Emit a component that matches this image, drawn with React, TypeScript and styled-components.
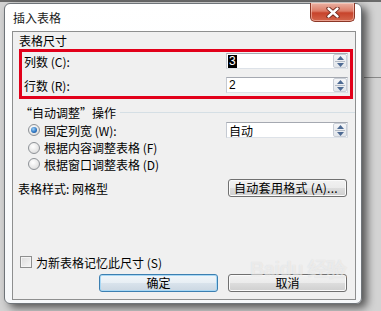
import styled, { createGlobalStyle } from 'styled-components';

const GlobalStyle = createGlobalStyle`
  html, body {
    margin: 0;
    padding: 0;
  }
  body {
    width: 381px;
    height: 311px;
    overflow: hidden;
    font-family: "Noto Sans CJK SC", "Liberation Sans", sans-serif;
    font-size: 12px;
    color: #000;
  }
`;

const Desktop = styled.div`
  width: 381px;
  height: 311px;
  box-sizing: border-box;
  padding: 3px 0 0 4px;
  background:
    linear-gradient(#8a8a8a, #8a8a8a) no-repeat 364px 77px / 17px 1px,
    linear-gradient(#6a6a6a, #6a6a6a) no-repeat 0 0 / 100% 2px,
    #d3d3d3;
`;

const Window = styled.div`
  position: relative;
  width: 358px;
  height: 301px;
  box-sizing: border-box;
  border: 1px solid #6f7479;
  border-radius: 6px;
  background: linear-gradient(#ffffff, #f6f8fa);
  box-shadow: 5px 4px 9px rgba(0, 0, 0, 0.6);
  display: flex;
  flex-direction: column;
  padding: 0 5px 3px 7px;
`;

const TitleBar = styled.div`
  height: 27px;
  display: flex;
  justify-content: space-between;
  align-items: flex-start;
`;

const Title = styled.div`
  padding: 5px 0 0 1px;
  font-size: 12px;
  line-height: 17px;
  color: #1a1a1a;
`;

const CloseButton = styled.div`
  width: 45px;
  height: 19px;
  margin: -1px 1px 0 0;
  box-sizing: border-box;
  border: 1px solid #8b3626;
  border-top: none;
  border-radius: 0 0 5px 5px;
  background: linear-gradient(#eab1a3 0%, #dc7b66 45%, #c7432b 55%, #d4664c 100%);
  box-shadow: inset 0 0 0 1px rgba(255, 220, 210, 0.5);
  display: flex;
  align-items: center;
  justify-content: center;
`;

const Client = styled.div`
  flex: 1;
  border: 1px solid #8e8f8f;
  background: #f0f0f0;
  display: flex;
  flex-direction: column;
  padding-bottom: 7px;
  line-height: 17px;
`;

const GroupHeader = styled.div<{ $indent: number }>`
  height: 17px;
  display: flex;
  align-items: center;
  gap: 4px;
  padding-left: ${p => p.$indent}px;
`;

const GroupLine = styled.div`
  flex: 1;
  height: 1px;
  margin-top: 1px;
  background: #d5dfe5;
`;

const Highlight = styled.div`
  height: 50px;
  box-sizing: border-box;
  margin: 0 2px 0 6px;
  border: 3px solid #e2001a;
  padding: 1px 2px 3px 2px;
  display: flex;
  flex-direction: column;
  gap: 8px;
`;

const FieldRow = styled.div`
  height: 16px;
  display: flex;
  align-items: center;
  justify-content: space-between;
`;

const SpinField = styled.div`
  width: 122px;
  height: 16px;
  box-sizing: border-box;
  border: 1px solid #a5a9b1;
  border-color: #a5a9b1 #d6dbe2 #dde2e8 #c5cad2;
  background: #fff;
  display: flex;
  align-items: center;
  justify-content: space-between;
  padding: 0 0 0 1px;
`;

const FieldValue = styled.span<{ $selected?: boolean }>`
  font-family: "Liberation Sans", sans-serif;
  font-size: 12px;
  line-height: 13px;
  padding: 0 1px;
  background: ${p => (p.$selected ? '#000' : 'transparent')};
  color: ${p => (p.$selected ? '#fff' : '#000')};
`;

const Spinner = styled.div`
  width: 14px;
  height: 14px;
  box-sizing: border-box;
  border: 1px solid #c9ced6;
  border-radius: 2px;
  background: linear-gradient(#f5f6f8, #e2e6eb);
  display: flex;
  flex-direction: column;
  align-items: center;
  justify-content: space-around;
  padding: 0;
  margin-right: 0;
`;

const SpinDivider = styled.div`
  width: 10px;
  height: 1px;
  background: #b3bbc6;
`;

const Row = styled.div<{ $h: number; $indent: number }>`
  height: ${p => p.$h}px;
  display: flex;
  align-items: center;
  padding-left: ${p => p.$indent}px;
  padding-right: 7px;
`;

const Grow = styled.div`
  flex: 1;
`;

const Radio = styled.span<{ $checked?: boolean }>`
  width: 12px;
  height: 12px;
  box-sizing: border-box;
  border-radius: 50%;
  border: 1px solid #8e9297;
  background: radial-gradient(circle at 40% 35%, #ffffff 0%, #e6e6e6 60%, #cfcfcf 100%);
  margin-right: 4px;
  display: flex;
  align-items: center;
  justify-content: center;

  &::after {
    content: '';
    display: ${p => (p.$checked ? 'block' : 'none')};
    width: 6px;
    height: 6px;
    border-radius: 50%;
    background: radial-gradient(circle at 40% 35%, #9fd1f7 0%, #2f78c4 55%, #0c3e82 100%);
  }
`;

const Checkbox = styled.span`
  width: 12px;
  height: 12px;
  box-sizing: border-box;
  border: 1px solid #8e8f8f;
  background: linear-gradient(135deg, #dcdcdc, #f6f6f6);
  box-shadow: inset 0 0 0 1px #f4f4f4;
  margin-right: 4px;
`;

const PushButton = styled.div<{ $default?: boolean }>`
  width: 119px;
  height: 18px;
  box-sizing: border-box;
  border: 1px solid ${p => (p.$default ? '#3c7fb1' : '#707070')};
  border-radius: 3px;
  background: ${p =>
    p.$default
      ? 'linear-gradient(#f1f6fa 0%, #e7eef4 50%, #d9e3ec 51%, #cbd7e2 100%)'
      : 'linear-gradient(#f2f2f2 0%, #ebebeb 50%, #dddddd 51%, #cfcfcf 100%)'};
  box-shadow: inset 0 0 0 1px ${p => (p.$default ? '#a8d8f5' : '#fbfbfb')};
  display: flex;
  align-items: center;
  justify-content: center;
  line-height: 16px;
`;

const LeftButton = styled(PushButton)`
  justify-content: flex-start;
  padding-left: 5px;
  letter-spacing: 0.3px;
`;

const ButtonBar = styled.div`
  height: 18px;
  display: flex;
  justify-content: flex-end;
  gap: 10px;
  padding-right: 8px;
  margin-top: 4px;
`;

const Watermark = styled.div`
  position: absolute;
  right: 14px;
  bottom: 24px;
  font-family: "Liberation Sans", sans-serif;
  font-size: 20px;
  font-weight: bold;
  line-height: 20px;
  color: rgba(255, 255, 255, 0.5);
  text-shadow: 0 0 1px rgba(150, 150, 150, 0.3);
  pointer-events: none;
  letter-spacing: -0.5px;
`;

const Spin = () => (
  <Spinner>
    <svg width="7" height="4" viewBox="0 0 7 4">
      <path d="M0 4 L3.5 0 L7 4 Z" fill="#4d6a93" />
    </svg>
    <SpinDivider />
    <svg width="7" height="4" viewBox="0 0 7 4">
      <path d="M0 0 L3.5 4 L7 0 Z" fill="#4d6a93" />
    </svg>
  </Spinner>
);

const CloseGlyph = () => (
  <svg width="14" height="11" viewBox="0 0 14 11">
    <path d="M2.5 1.5 L11.5 9.5 M11.5 1.5 L2.5 9.5" stroke="#6b2418" strokeWidth="4.2" strokeLinecap="round" />
    <path d="M2.5 1.5 L11.5 9.5 M11.5 1.5 L2.5 9.5" stroke="#ffffff" strokeWidth="2.4" strokeLinecap="round" />
  </svg>
);

export default function App() {
  return (
    <>
      <GlobalStyle />
      <Desktop>
        <Window>
          <TitleBar>
            <Title>插入表格</Title>
            <CloseButton>
              <CloseGlyph />
            </CloseButton>
          </TitleBar>
          <Client>
            <GroupHeader $indent={6}>表格尺寸</GroupHeader>
            <Highlight>
              <FieldRow>
                <span>列数 (C):</span>
                <SpinField>
                  <FieldValue $selected>3</FieldValue>
                  <Spin />
                </SpinField>
              </FieldRow>
              <FieldRow>
                <span>行数 (R):</span>
                <SpinField>
                  <FieldValue>2</FieldValue>
                  <Spin />
                </SpinField>
              </FieldRow>
            </Highlight>
            <GroupHeader $indent={7} style={{ marginTop: 4, height: 18 }}>
              “自动调整”操作
              <GroupLine />
            </GroupHeader>
            <Row $h={18} $indent={15}>
              <Radio $checked />
              固定列宽 (W):
              <Grow />
              <SpinField>
                <span style={{ paddingLeft: 1 }}>自动</span>
                <Spin />
              </SpinField>
            </Row>
            <Row $h={17} $indent={15}>
              <Radio />
              根据内容调整表格 (F)
            </Row>
            <Row $h={16} $indent={15}>
              <Radio />
              根据窗口调整表格 (D)
            </Row>
            <Row $h={18} $indent={5} style={{ marginTop: 7, paddingRight: 8 }}>
              表格样式: 网格型
              <Grow />
              <LeftButton>自动套用格式 (A)...</LeftButton>
            </Row>
            <Grow />
            <Row $h={16} $indent={7}>
              <Checkbox />
              为新表格记忆此尺寸 (S)
            </Row>
            <ButtonBar>
              <PushButton $default>确定</PushButton>
              <PushButton>取消</PushButton>
            </ButtonBar>
          </Client>
          <Watermark>Baidu 经验</Watermark>
        </Window>
      </Desktop>
    </>
  );
}
